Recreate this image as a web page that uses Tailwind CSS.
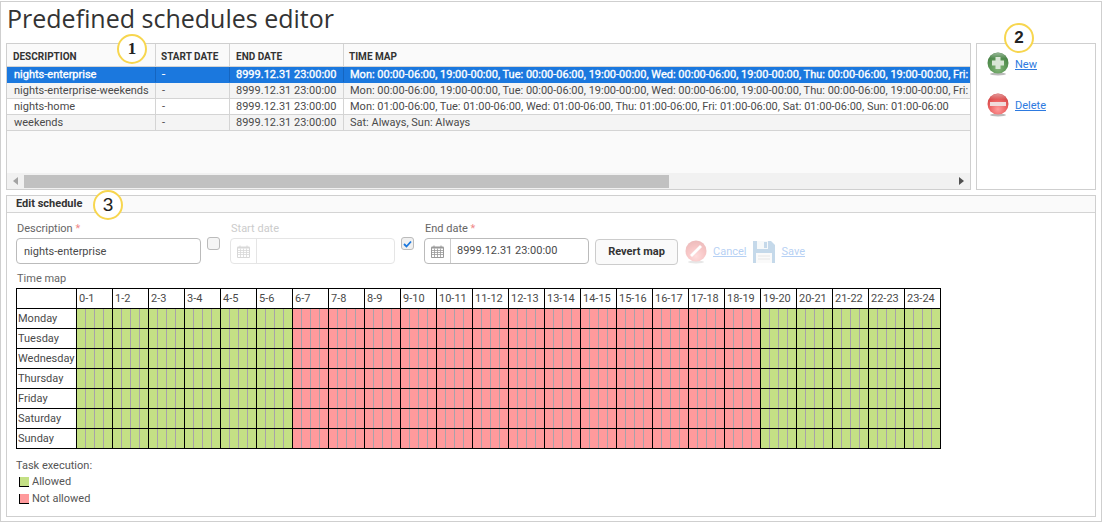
<!doctype html>
<html>
<head>
<meta charset="utf-8">
<script src="https://cdn.jsdelivr.net/npm/@tailwindcss/browser@4"></script>
</head>
<body class="bg-white font-['Roboto',sans-serif] text-[11px] text-[#4a4a4a]">
<svg width="0" height="0" class="absolute">
  <defs>
    <radialGradient id="gg" cx="50%" cy="75%" r="70%"><stop offset="0" stop-color="#86b87b"/><stop offset="0.6" stop-color="#5a9555"/><stop offset="1" stop-color="#457f44"/></radialGradient>
    <radialGradient id="rg" cx="50%" cy="75%" r="70%"><stop offset="0" stop-color="#ff9c9c"/><stop offset="0.6" stop-color="#ea6060"/><stop offset="1" stop-color="#cf4444"/></radialGradient>
    <linearGradient id="sh" x1="0" y1="0" x2="0" y2="1"><stop offset="0" stop-color="#fff" stop-opacity=".45"/><stop offset="0.55" stop-color="#fff" stop-opacity="0"/></linearGradient>
    <symbol id="cal" viewBox="0 0 13 13">
      <path d="M.5 2.500h12v10H.5z" fill="#fff" stroke="currentColor"/><path d="M.5 1.500h12v2H.5z" fill="currentColor"/><path d="M3 .5v2M10 .5v2" stroke="currentColor"/>
      <path d="M.5 5.500h12M.5 7.500h12M.5 9.500h12M3.500 3.500v9M6.500 3.500v9M9.500 3.500v9" stroke="currentColor" stroke-width=".8"/>
    </symbol>
  </defs>
</svg>

<div class="relative mt-px w-[1102px] h-[521px] border border-[#cfcfcf] pl-[5px] pr-[4px] flex flex-col">
  <h1 class="h-[41px] pl-px font-['Open_Sans',sans-serif] font-normal text-[25px] leading-[32px] text-[#333]">Predefined schedules editor</h1>

  <div class="flex gap-[5px] h-[147px]">
    <!-- table panel -->
    <div class="relative w-[965px] h-full border border-[#cfcfcf] bg-[#fafafa] overflow-hidden">
      <div class="flex h-[23px] border-b border-[#d4d4d4] font-bold text-[10px] text-[#333] leading-[25px]">
        <div class="w-[149px] pl-[6px] border-r border-[#d4d4d4] shrink-0">DESCRIPTION</div>
        <div class="w-[74px] pl-[5px] border-r border-[#d4d4d4] shrink-0">START DATE</div>
        <div class="w-[114px] pl-[6px] border-r border-[#d4d4d4] shrink-0">END DATE</div>
        <div class="pl-[5px]">TIME MAP</div>
      </div>
      <div class="flex h-[16px] leading-[15px] border-b border-[#1b78de] bg-[#1b78de] text-white [-webkit-text-stroke:0.35px_white] whitespace-nowrap">
        <div class="w-[149px] pl-[7px] border-r border-[#1565c0] shrink-0">nights-enterprise</div>
        <div class="w-[74px] pl-[6px] border-r border-[#1565c0] shrink-0">-</div>
        <div class="w-[114px] pl-[6px] border-r border-[#1565c0] shrink-0">8999.12.31 23:00:00</div>
        <div class="pl-[6px] w-[625px] overflow-hidden shrink-0">Mon: 00:00-06:00, 19:00-00:00, Tue: 00:00-06:00, 19:00-00:00, Wed: 00:00-06:00, 19:00-00:00, Thu: 00:00-06:00, 19:00-00:00, Fri:</div>
      </div>
      <div class="flex h-[16px] leading-[15px] border-b border-[#d4d4d4] bg-[#f4f4f4] whitespace-nowrap">
        <div class="w-[149px] pl-[7px] border-r border-[#d4d4d4] shrink-0">nights-enterprise-weekends</div>
        <div class="w-[74px] pl-[6px] border-r border-[#d4d4d4] shrink-0">-</div>
        <div class="w-[114px] pl-[6px] border-r border-[#d4d4d4] shrink-0">8999.12.31 23:00:00</div>
        <div class="pl-[6px] w-[625px] overflow-hidden shrink-0">Mon: 00:00-06:00, 19:00-00:00, Tue: 00:00-06:00, 19:00-00:00, Wed: 00:00-06:00, 19:00-00:00, Thu: 00:00-06:00, 19:00-00:00, Fri:</div>
      </div>
      <div class="flex h-[16px] leading-[15px] border-b border-[#d4d4d4] bg-white whitespace-nowrap">
        <div class="w-[149px] pl-[7px] border-r border-[#d4d4d4] shrink-0">nights-home</div>
        <div class="w-[74px] pl-[6px] border-r border-[#d4d4d4] shrink-0">-</div>
        <div class="w-[114px] pl-[6px] border-r border-[#d4d4d4] shrink-0">8999.12.31 23:00:00</div>
        <div class="pl-[6px] w-[625px] overflow-hidden shrink-0">Mon: 01:00-06:00, Tue: 01:00-06:00, Wed: 01:00-06:00, Thu: 01:00-06:00, Fri: 01:00-06:00, Sat: 01:00-06:00, Sun: 01:00-06:00</div>
      </div>
      <div class="flex h-[16px] leading-[15px] border-b border-[#d4d4d4] bg-[#f4f4f4] whitespace-nowrap">
        <div class="w-[149px] pl-[7px] border-r border-[#d4d4d4] shrink-0">weekends</div>
        <div class="w-[74px] pl-[6px] border-r border-[#d4d4d4] shrink-0">-</div>
        <div class="w-[114px] pl-[6px] border-r border-[#d4d4d4] shrink-0">8999.12.31 23:00:00</div>
        <div class="pl-[6px] w-[625px] overflow-hidden shrink-0">Sat: Always, Sun: Always</div>
      </div>
      <!-- scrollbar -->
      <div class="absolute left-0 right-0 bottom-0 h-[16px] bg-[#f1f1f1] flex items-center">
        <svg width="5" height="8" class="ml-[6px]"><path d="M5 0v8L0 4z" fill="#a3a3a3"/></svg>
        <div class="ml-[6px] w-[645px] h-[13px] bg-[#c1c1c1]"></div>
        <svg width="5" height="8" class="ml-auto mr-[6px]"><path d="M0 0v8l5-4z" fill="#505050"/></svg>
      </div>
    </div>

    <!-- actions -->
    <div class="w-[120px] h-full border border-[#cfcfcf] pl-[10px] pt-[9px] flex flex-col gap-[19px]">
      <div class="flex items-center gap-[6px] h-[22px]">
        <svg width="22" height="24" viewBox="0 0 22 24" class="shrink-0"><ellipse cx="11" cy="22" rx="8" ry="1.500" fill="#bbb"/><circle cx="11" cy="11" r="10.500" fill="url(#gg)"/><path d="M8.500 5h5v3.500H17v5h-3.500V17h-5v-3.500H5v-5h3.500z" fill="#d9e6d6"/><ellipse cx="11" cy="6" rx="8" ry="5" fill="url(#sh)"/></svg>
        <a class="text-[#2d7ae0] underline leading-none mt-px">New</a>
      </div>
      <div class="flex items-center gap-[6px] h-[22px]">
        <svg width="22" height="24" viewBox="0 0 22 24" class="shrink-0"><ellipse cx="11" cy="22" rx="8" ry="1.500" fill="#bbb"/><circle cx="11" cy="11" r="10.500" fill="url(#rg)"/><rect x="3" y="9" width="16" height="4" fill="#f0dcdc"/><ellipse cx="11" cy="6" rx="8" ry="5" fill="url(#sh)"/></svg>
        <a class="text-[#2d7ae0] underline leading-none mt-px">Delete</a>
      </div>
    </div>
  </div>

  <!-- edit panel -->
  <div class="mt-[5px] w-[1090px] h-[322px] border border-[#cfcfcf]">
    <div class="h-[17px] bg-[#fafafa] border-b border-[#d4d4d4] pl-[9px] font-bold text-[11px] leading-[16px] text-[#333]">Edit schedule</div>
    <div class="pl-[9px] pt-[9px]">
      <div class="flex items-start h-[50px]">
        <div class="w-[185px] shrink-0">
          <div class="h-[16px] pl-px text-[#666] leading-[13px]">Description <span class="text-[#f08a8a]">*</span></div>
          <div class="h-[26px] border border-[#bbb] rounded-[4px] pl-[7px] leading-[25px] bg-white">nights-enterprise</div>
        </div>
        <div class="ml-[6px] mt-[15px] w-[13px] h-[13px] border border-[#bbb] rounded-[3px] bg-[#f5f5f5] shrink-0"></div>
        <div class="ml-[10px] w-[165px] shrink-0">
          <div class="h-[16px] pl-px text-[#ccc] leading-[13px]">Start date</div>
          <div class="flex h-[26px] border border-[#e5e5e5] rounded-[4px]">
            <div class="w-[26px] border-r border-[#e5e5e5] flex items-center justify-center text-[#d8d8d8]"><svg width="13" height="13"><use href="#cal"/></svg></div>
          </div>
        </div>
        <div class="ml-[6px] mt-[15px] w-[13px] h-[13px] border border-[#bbb] rounded-[3px] bg-[#f0f0f0] shrink-0 flex items-center justify-center">
          <svg width="9" height="8" viewBox="0 0 9 8"><path d="M1 4l2.500 2.500L8 1.500" fill="none" stroke="#1b78de" stroke-width="1.800"/></svg>
        </div>
        <div class="ml-[10px] w-[165px] shrink-0">
          <div class="h-[16px] pl-px text-[#666] leading-[13px]">End date <span class="text-[#f08a8a]">*</span></div>
          <div class="flex h-[26px] border border-[#bbb] rounded-[4px]">
            <div class="w-[26px] shrink-0 border-r border-[#ccc] flex items-center justify-center text-[#999]"><svg width="13" height="13"><use href="#cal"/></svg></div>
            <div class="pl-[6px] leading-[24px]">8999.12.31 23:00:00</div>
          </div>
        </div>
        <button class="ml-[6px] mt-[17px] w-[83px] h-[26px] border border-[#ccc] rounded-[4px] bg-[#fafafa] font-bold text-[11px] text-[#333] shrink-0">Revert map</button>
        <div class="ml-[7px] mt-[17px] flex items-center h-[26px] opacity-35">
          <svg width="22" height="24" viewBox="0 0 22 24" class="shrink-0"><ellipse cx="11" cy="22" rx="8" ry="1.500" fill="#bbb"/><circle cx="11" cy="11" r="10.500" fill="url(#rg)"/><path d="M5 15L15 5l2 2L7 17z" fill="#fff"/></svg>
          <a class="ml-[6px] text-[#2d7ae0] underline">Cancel</a>
          <svg width="22" height="24" viewBox="0 0 22 24" class="ml-[7px] shrink-0"><path d="M0 1h18l4 4v18H0z" fill="#5b94c4"/><rect x="4" y="1" width="11" height="8" fill="#e8eef3"/><rect x="11" y="2" width="3" height="6" fill="#5b94c4"/><rect x="3" y="13" width="16" height="10" fill="#f3f3f3"/><path d="M5 16h12M5 19h12" stroke="#bbb"/></svg>
          <a class="ml-[6px] text-[#2d7ae0] underline">Save</a>
        </div>
      </div>
      <div class="h-[16px] mt-[-1px] pl-px text-[#666] leading-[16px]">Time map</div>

      <div id="tm" class="mt-[1px] w-[925px] grid grid-cols-[59px_repeat(24,35px)] auto-rows-[19px] gap-px p-px bg-black text-[11px] leading-[19px]"></div>

      <div class="mt-[10px] leading-[14px] text-[#555]">Task execution:</div>
      <div class="mt-[2px] ml-[3px] flex items-center h-[14px] gap-[3px] text-[#555]"><span class="w-[10px] h-[10px] bg-[#c4e085] border-b border-l border-black"></span>Allowed</div>
      <div class="mt-[3px] ml-[3px] flex items-center h-[14px] gap-[3px] text-[#555]"><span class="w-[10px] h-[10px] bg-[#ff9a9c] border-b border-l border-black"></span>Not allowed</div>
    </div>
  </div>

  <!-- callouts -->
  <div class="absolute left-[116px] top-[32px] w-[30px] h-[30px] rounded-full bg-white border-2 border-[#f7d64f] flex items-center justify-center font-['Liberation_Serif',serif] font-bold text-[17px] text-[#222]">1</div>
  <div class="absolute left-[1003px] top-[21px] w-[30px] h-[30px] rounded-full bg-white border-2 border-[#f7d64f] flex items-center justify-center font-['Liberation_Sans',sans-serif] font-bold text-[17px] text-[#222]">2</div>
  <div class="absolute left-[92px] top-[188px] w-[30px] h-[30px] rounded-full bg-white border-2 border-[#f7d64f] flex items-center justify-center font-['Liberation_Sans',sans-serif] text-[19px] text-[#222]">3</div>
</div>

<script>
  var G = "bg-[repeating-linear-gradient(90deg,#c4e085_0_8px,#a8a2aa_8px_9px)]";
  var R = "bg-[repeating-linear-gradient(90deg,#ff9a9c_0_8px,#a8a2aa_8px_9px)]";
  var H = "bg-white pl-[2px] whitespace-nowrap overflow-hidden";
  var L = "bg-white pl-[1px] whitespace-nowrap overflow-hidden";
  var tm = document.getElementById("tm");
  function add(cls, txt) { var d = document.createElement("div"); d.className = cls; d.textContent = txt || ""; tm.appendChild(d); }
  add(L);
  for (var h = 0; h < 24; h++) add(H, h + "-" + (h + 1));
  ["Monday","Tuesday","Wednesday","Thursday","Friday","Saturday","Sunday"].forEach(function (day) {
    add(L, day);
    for (var h = 0; h < 24; h++) add(h >= 6 && h < 19 ? R : G);
  });
</script>
</body>
</html>
